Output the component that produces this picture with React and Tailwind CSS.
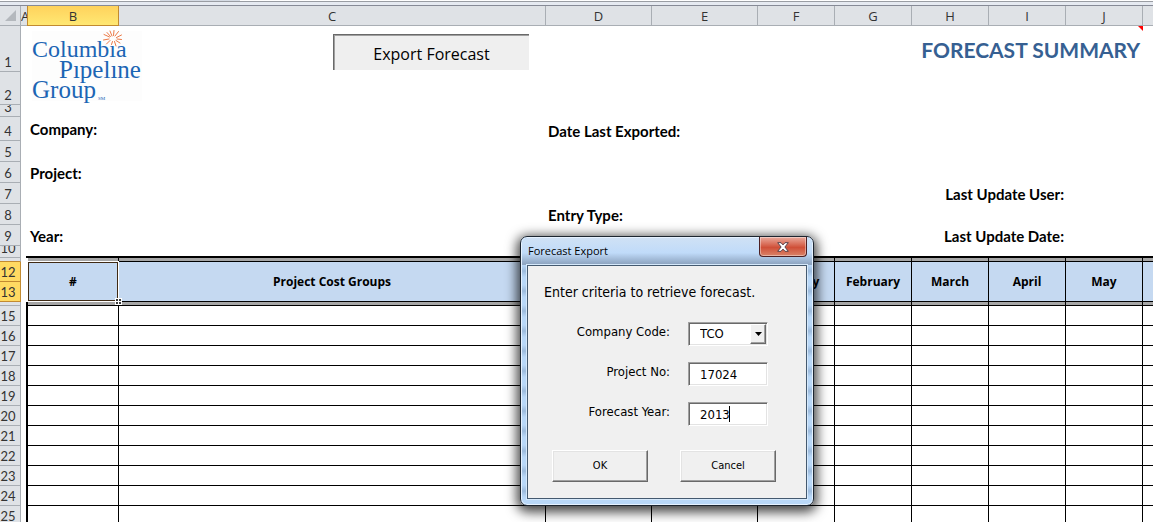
import React from "react";

const MONTHS = ["January", "February", "March", "April", "May", "June"];
const DATA_ROWS = [15, 16, 17, 18, 19, 20, 21, 22, 23, 24, 25];

const COLUMNS = [
  { id: "A", width: "w-[7px]" },
  { id: "B", width: "w-[91px]" },
  { id: "C", width: "w-[427px]" },
  { id: "D", width: "w-[106px]" },
  { id: "E", width: "w-[106px]" },
  { id: "F", width: "w-[77px]" },
  { id: "G", width: "w-[77px]" },
  { id: "H", width: "w-[77px]" },
  { id: "I", width: "w-[77px]" },
  { id: "J", width: "w-[77px]" },
  { id: "K", width: "w-auto" },
];

function ColumnHead({ id }) {
  const selected = id === "B";
  return (
    <th
      scope="col"
      className={
        selected
          ? "h-5 overflow-hidden border-r border-b border-[#c28a30] bg-linear-to-b from-[#ffd25c] to-[#ffe873] p-0 text-center font-normal shadow-[-1px_0_0_#c28a30]"
          : "h-5 overflow-hidden border-r border-b border-[#a9aeb4] bg-[#dfe2e6] p-0 text-center font-normal last:border-r-0"
      }
    >
      <span className="block leading-[18px]">{id === "K" ? "" : id}</span>
    </th>
  );
}

function RowHead({ label, height, selected, beforeSelected }) {
  const base = "overflow-hidden border-r border-b p-0 align-bottom font-normal ";
  const tone = selected
    ? "border-[#c28a30] bg-[#ffda62] "
    : beforeSelected
      ? "border-r-[#a9aeb4] border-b-[#c28a30] bg-[#dfe2e6] "
      : "border-[#a9aeb4] bg-[#dfe2e6] ";
  return (
    <th scope="row" className={base + tone + height}>
      {label === 3 || label === 10 ? (
        <div className="flex h-[11px] items-end justify-center overflow-hidden pr-1 leading-[18px]">
          {label}
        </div>
      ) : (
        label && <div className="pr-1 text-center leading-[18px]">{label}</div>
      )}
    </th>
  );
}

function Logo() {
  return (
    <svg
      role="img"
      aria-label="Columbia Pipeline Group"
      viewBox="0 0 112 74"
      className="h-[74px] w-28 shrink-0 overflow-visible"
    >
      <rect x="0" y="3" width="110" height="70" fill="#fdfdfd" />
      <g fill="#1c65b4" fontFamily="'Liberation Serif', serif">
        <text x="0" y="29" fontSize="24">Columbıa</text>
        <text x="27" y="50" fontSize="25">Pıpelıne</text>
        <text x="0" y="70" fontSize="25">Group</text>
        <text x="66" y="72" fontSize="5">SM</text>
      </g>
      <g stroke="#ec7a48" strokeWidth="1" strokeLinecap="round" fill="none">
        <path d="M80 8L78 3M81.500 7.500L82 2.500M83 8L86.500 3.500M84.500 9.500L89.500 7M85 11L89.500 11.500M84 12.500L88 15M82.500 13.500L84 18M77.500 9L72 6.500M77 11L71.500 12M78 12.500L74.500 16M78.500 8.500L75 4.500M80.500 13.500L79.500 16.500" />
      </g>
    </svg>
  );
}

function Cell({ span, rows, className = "", children }) {
  return (
    <td colSpan={span} rowSpan={rows} className={"p-0 align-bottom whitespace-nowrap " + className}>
      {children}
    </td>
  );
}

function Label({ children }) {
  return <div className="pl-0.5 text-[15px] leading-5 font-bold text-black">{children}</div>;
}

function GreyBand({ height, left }) {
  return (
    <>
      <td className={left ? "border-r-2 border-black p-0" : "p-0"} />
      {COLUMNS.slice(1).map((c) => (
        <td
          key={c.id}
          className={"border-r border-b border-black bg-[#a6a6a6] p-0 last:border-r-0 " + height}
        />
      ))}
    </>
  );
}

function Sheet() {
  return (
    <table className="w-full min-w-[1153px] table-fixed border-separate border-spacing-0 font-['Open_Sans','Noto_Sans',sans-serif] text-[13px] text-[#333]">
      <colgroup>
        <col className="w-[21px]" />
        {COLUMNS.map((c) => (
          <col key={c.id} className={c.width} />
        ))}
      </colgroup>
      <thead>
        <tr>
          <th aria-label="Select all" className="h-5 border-r border-b border-[#a9aeb4] bg-[#dfe2e6] p-0">
            <svg viewBox="0 0 11 11" className="ml-[5px] size-[11px]">
              <path d="M11 0V11H0Z" fill="#b4b8bd" />
            </svg>
          </th>
          {COLUMNS.map((c) => (
            <ColumnHead key={c.id} id={c.id} />
          ))}
        </tr>
      </thead>
      <tbody className="font-['Lato',sans-serif]">
        <tr>
          <RowHead label={1} height="h-[46px]" />
          <Cell />
          <Cell span={2} rows={2} className="align-top">
            <div className="flex items-start pt-0.5 pl-1">
              <Logo />
              <button
                type="button"
                className="mt-1.5 ml-[189px] h-9 w-[196px] border-t border-l border-[#696969] bg-[#efefef] pt-0.5 font-['Open_Sans',sans-serif] text-base text-black shadow-[inset_1px_1px_0_#a0a0a0]"
              >
                Export Forecast
              </button>
            </div>
          </Cell>
          <Cell span={7} className="relative align-middle">
            <h1 className="pt-0.5 pr-[3px] text-right text-[21px] leading-7 font-bold text-[#366092]">
              FORECAST SUMMARY
            </h1>
            <svg viewBox="0 0 5 5" className="absolute top-0 right-0 size-[5px]">
              <path d="M0 0H5V5Z" fill="#f00" />
            </svg>
          </Cell>
          <Cell />
        </tr>
        <tr>
          <RowHead label={2} height="h-[33px]" />
          <Cell />
          <Cell span={8} />
        </tr>
        <tr>
          <RowHead label={3} height="h-3" />
          <Cell span={11} />
        </tr>
        <tr>
          <RowHead label={4} height="h-6" />
          <Cell />
          <Cell span={2} className="align-middle"><Label>Company:</Label></Cell>
          <Cell span={8}><Label>Date Last Exported:</Label></Cell>
        </tr>
        <tr>
          <RowHead label={5} height="h-[21px]" />
          <Cell span={11} />
        </tr>
        <tr>
          <RowHead label={6} height="h-[21px]" />
          <Cell />
          <Cell span={10}><Label>Project:</Label></Cell>
        </tr>
        <tr>
          <RowHead label={7} height="h-[21px]" />
          <Cell span={9} className="pr-0.5 text-right"><Label>Last Update User:</Label></Cell>
          <Cell span={2} />
        </tr>
        <tr>
          <RowHead label={8} height="h-[21px]" />
          <Cell span={3} />
          <Cell span={8}><Label>Entry Type:</Label></Cell>
        </tr>
        <tr>
          <RowHead label={9} height="h-[21px]" />
          <Cell />
          <Cell span={2}><Label>Year:</Label></Cell>
          <Cell span={6} className="pr-0.5 text-right"><Label>Last Update Date:</Label></Cell>
          <Cell span={2} />
        </tr>
        <tr>
          <RowHead label={10} height="h-3" />
          <Cell><div className="ml-auto size-0.5 bg-black" /></Cell>
          <Cell span={10} className="border-b-2 border-black" />
        </tr>
        <tr>
          <RowHead height="h-1" beforeSelected />
          <GreyBand height="h-1" />
        </tr>
        <tr>
          <RowHead label={12} height="h-5" selected />
          <Cell rows={2} />
          {["#", "Project Cost Groups", "", "", ...MONTHS].map((title, i) => (
            <th
              key={i}
              rowSpan={2}
              className="relative border-r border-b border-black bg-[#c5d9f1] p-0 text-center font-['Open_Sans',sans-serif] text-xs font-bold text-black last:border-r-0"
            >
              {title === "June" ? "" : title}
              {i === 0 && (
                <>
                  <span className="absolute inset-0 border border-[#3f2a14] shadow-[0_0_0_1px_#fff]" />
                  <svg viewBox="0 0 7 7" className="absolute -right-1 -bottom-1 z-10 size-[7px]">
                    <path d="M0 0H7V7H0Z" fill="#fff" />
                    <path d="M1 1H6V6H1Z" fill="#3a3a3a" />
                    <path d="M3 0H4V7H3ZM0 3H7V4H0Z" fill="#fff" />
                  </svg>
                </>
              )}
            </th>
          ))}
        </tr>
        <tr>
          <RowHead label={13} height="h-5" selected />
        </tr>
        <tr>
          <RowHead height="h-1" />
          <GreyBand height="h-1" left />
        </tr>
        {DATA_ROWS.map((n) => (
          <tr key={n}>
            <RowHead label={n} height="h-5" />
            <td className="border-r-2 border-black p-0" />
            {COLUMNS.slice(1).map((c) => (
              <td key={c.id} className="border-r border-b border-black bg-white p-0 last:border-r-0" />
            ))}
          </tr>
        ))}
      </tbody>
    </table>
  );
}

const SUNKEN =
  "block h-6 w-20 border border-t-[#a0a0a0] border-l-[#a0a0a0] border-r-white border-b-white bg-white pl-[11px] text-[13px] text-black shadow-[inset_1px_1px_0_#696969,inset_-1px_-1px_0_#e3e3e3] outline-none";

const RAISED =
  "h-8 w-24 border border-t-white border-l-white border-r-[#696969] border-b-[#696969] bg-[#f0f0f0] text-[11px] text-black shadow-[inset_-1px_-1px_0_#a0a0a0,inset_1px_1px_0_#e3e3e3]";

function Field({ id, label, children }) {
  return (
    <div className="flex h-10 items-start">
      <label htmlFor={id} className="w-[142px] text-right text-[13px] leading-5">
        {label}
      </label>
      <div className="relative ml-[18px]">{children}</div>
    </div>
  );
}

function ForecastDialog() {
  return (
    <form
      role="dialog"
      aria-labelledby="dialog-title"
      onSubmit={(e) => e.preventDefault()}
      className="absolute top-[236px] left-[520px] w-[294px] rounded-[7px] border border-[#1c2530] bg-[repeating-linear-gradient(180deg,#b9d8f8_0px,#b9d8f8_8px,#9dbbdc_14px,#b9d8f8_20px)] px-1.5 pb-1.5 font-['DejaVu_Sans_Condensed','DejaVu_Sans',sans-serif] text-black shadow-[inset_0_0_0_1px_#e6f2ff,0_3px_12px_3px_rgba(0,0,0,0.75)]"
    >
      <div className="-mx-[5px] mt-px flex h-[27px] items-start justify-between rounded-t-[6px] bg-linear-to-b from-[#cfe1f5] via-[#c0dbf9] via-55% to-[#8fa6c2] to-95% pl-1.5">
        <h2 id="dialog-title" className="pt-1 font-['Open_Sans',sans-serif] text-[11px] leading-[18px]">
          Forecast Export
        </h2>
        <button
          type="button"
          aria-label="Close"
          className="-mt-px mr-[5px] flex h-5 w-12 items-center justify-center rounded-b-[4px] border border-t-0 border-[#4c1f22] bg-linear-to-b from-[#e9a99c] from-0% via-[#cf4f38] via-55% to-[#d98268] shadow-[inset_0_0_0_1px_rgba(255,255,255,0.4)]"
        >
          <svg viewBox="0 0 12 10" className="h-2.5 w-3">
            <path
              d="M0.700 0.700H4L6 2.900L8 0.700H11.300L7.900 5L11.300 9.300H8L6 7.100L4 9.300H0.700L4.100 5Z"
              fill="#fff"
              stroke="#55414a"
              strokeWidth="1"
            />
          </svg>
        </button>
      </div>
      <div className="border border-[#44596f] bg-[#f0f0f0] pb-4 shadow-[0_0_0_1px_#d6e9fb]">
        <p className="pt-4 pl-4 text-sm leading-5">Enter criteria to retrieve forecast.</p>
        <div className="pt-5">
          <Field id="company" label="Company Code:">
            <select id="company" defaultValue="TCO" className={"appearance-none " + SUNKEN}>
              <option>TCO</option>
            </select>
            <span className="pointer-events-none absolute top-0.5 right-0.5 flex h-5 w-4 items-center justify-center border border-t-white border-l-white border-r-[#696969] border-b-[#696969] bg-[#f0f0f0] shadow-[inset_-1px_-1px_0_#a0a0a0]">
              <svg viewBox="0 0 7 4" className="h-1 w-[7px]">
                <path d="M0 0H7L3.500 4Z" fill="#000" />
              </svg>
            </span>
          </Field>
          <Field id="project" label="Project No:">
            <input id="project" type="text" defaultValue="17024" className={SUNKEN} />
          </Field>
          <Field id="year" label="Forecast Year:">
            <input id="year" type="text" defaultValue="2013" className={SUNKEN} />
            <span className="absolute top-1 left-[41px] h-4 w-px bg-black" />
          </Field>
        </div>
        <div className="flex gap-8 pt-2 pl-6">
          <button type="submit" className={RAISED}>OK</button>
          <button type="button" className={RAISED}>Cancel</button>
        </div>
      </div>
    </form>
  );
}

export default function App() {
  return (
    <main className="relative h-screen overflow-hidden bg-white">
      <div className="flex h-[5px] flex-col bg-[#e6eaf1]">
        <div className="flex h-px bg-white">
          <div className="ml-40 w-20 bg-[#d5dbe4]" />
        </div>
        <div className="h-px bg-[#9a9da3]" />
      </div>
      <div className="h-px bg-[#868a96]" />
      <Sheet />
      <ForecastDialog />
    </main>
  );
}
